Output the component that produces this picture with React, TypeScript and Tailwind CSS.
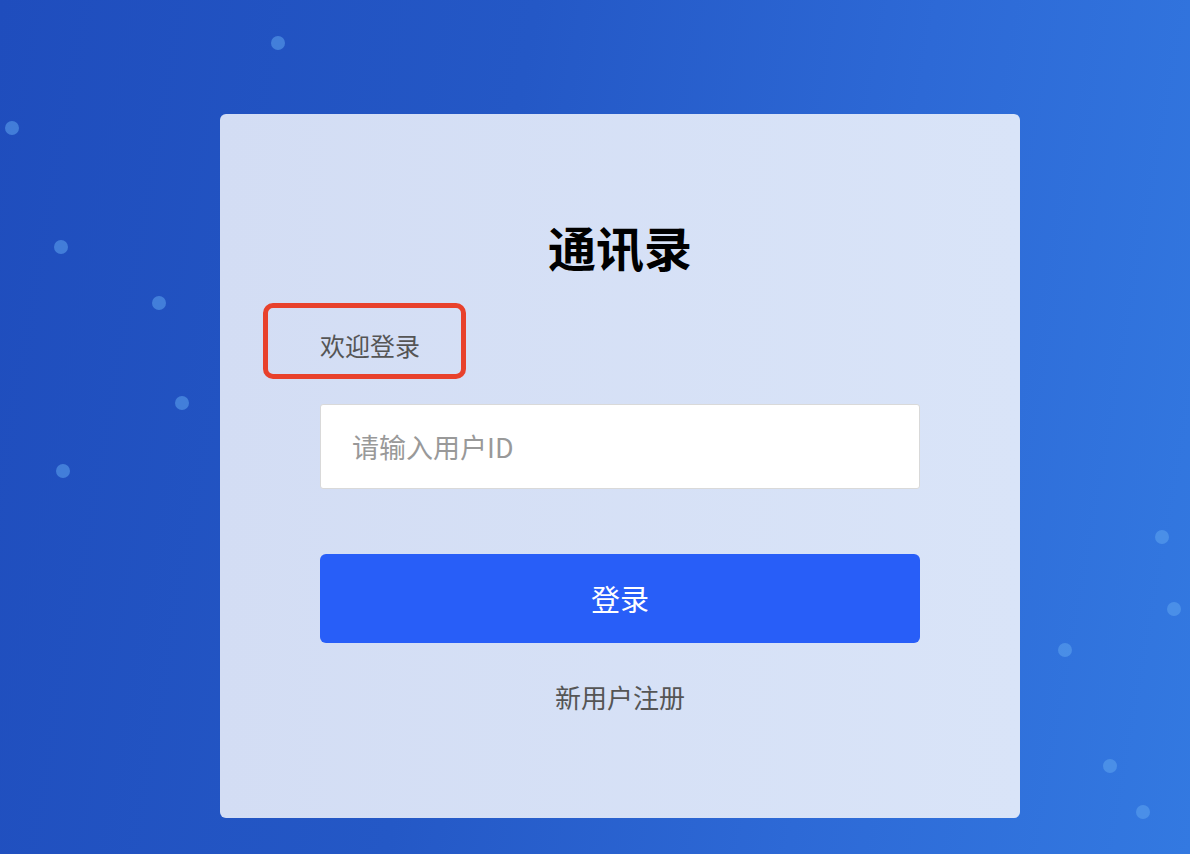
import React from "react";

const dots: [number, number][] = [
  [278, 43],
  [12, 128],
  [61, 247],
  [159, 303],
  [182, 403],
  [63, 471],
  [1162, 537],
  [1174, 609],
  [1065, 650],
  [1110, 766],
  [1143, 812],
];

const Dots = () => (
  <svg className="absolute inset-0 h-full w-full" width="1190" height="854" viewBox="0 0 1190 854">
    {dots.map(([x, y], i) => (
      <circle key={i} cx={x} cy={y} r="7" fill="#5ea4ee" opacity="0.55" />
    ))}
  </svg>
);

const App = () => {
  return (
    <div className="relative h-[854px] w-full overflow-hidden bg-[linear-gradient(100deg,#1f4dbd_0%,#2458c6_40%,#2d69d6_70%,#3379e1_100%)] font-['Noto_Sans_CJK_SC','Noto_Sans',sans-serif]">
      <Dots />
      <div className="relative flex pl-[220px] pt-[114px]">
        <div className="flex h-[704px] w-[800px] flex-col rounded-md bg-[linear-gradient(90deg,#d3ddf4,#d9e4f8)] px-[100px] pt-[100px]">
          <h1 className="text-center text-[48px] font-bold leading-[64px] text-black">通讯录</h1>

          <div className="relative mt-[47px] h-[40px]">
            <span className="text-[25px] leading-[40px] text-[#555]">欢迎登录</span>
            {/* annotation frame */}
            <div className="absolute left-[-57px] top-[-22px] h-[76px] w-[203px] rounded-[10px] border-[5px] border-[#e8412c]"></div>
          </div>

          <input
            className="mt-[39px] h-[85px] w-full rounded-[3px] border border-[#d9d9d9] bg-white pl-[31px] text-[27px] text-[#333] outline-none placeholder:text-[#999]"
            placeholder="请输入用户ID"
          />

          <button className="mt-[65px] h-[89px] w-full rounded-md bg-[#285ef8] text-[29px] text-white">登录</button>

          <div className="mt-[34px] text-center text-[26px] leading-[40px] text-[#555]">新用户注册</div>
        </div>
      </div>
    </div>
  );
};

export default App;
